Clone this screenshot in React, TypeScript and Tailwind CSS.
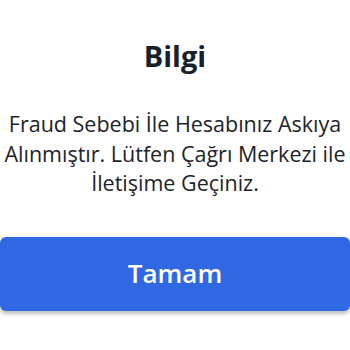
import React from "react";

const App = () => {
    return (
        <div className="flex h-[350px] w-[350px] flex-col items-center bg-white font-['Open_Sans','Noto_Sans',sans-serif] text-[#17202b]">
            <h1 className="mt-[36px] text-[29px] leading-[40px] font-bold">Bilgi</h1>
            <p className="mt-[33px] px-[4px] text-center text-[21.5px] leading-[29.5px] text-[#1d232b]">
                Fraud Sebebi İle Hesabınız Askıya Alınmıştır. Lütfen Çağrı Merkezi ile İletişime Geçiniz.
            </p>
            <button className="mt-[39px] h-[74px] w-full rounded-md bg-[#2f68e2] text-[26px] font-semibold text-white shadow-[0_3px_4px_rgba(0,0,0,0.25)]">
                Tamam
            </button>
        </div>
    );
};

export default App;
